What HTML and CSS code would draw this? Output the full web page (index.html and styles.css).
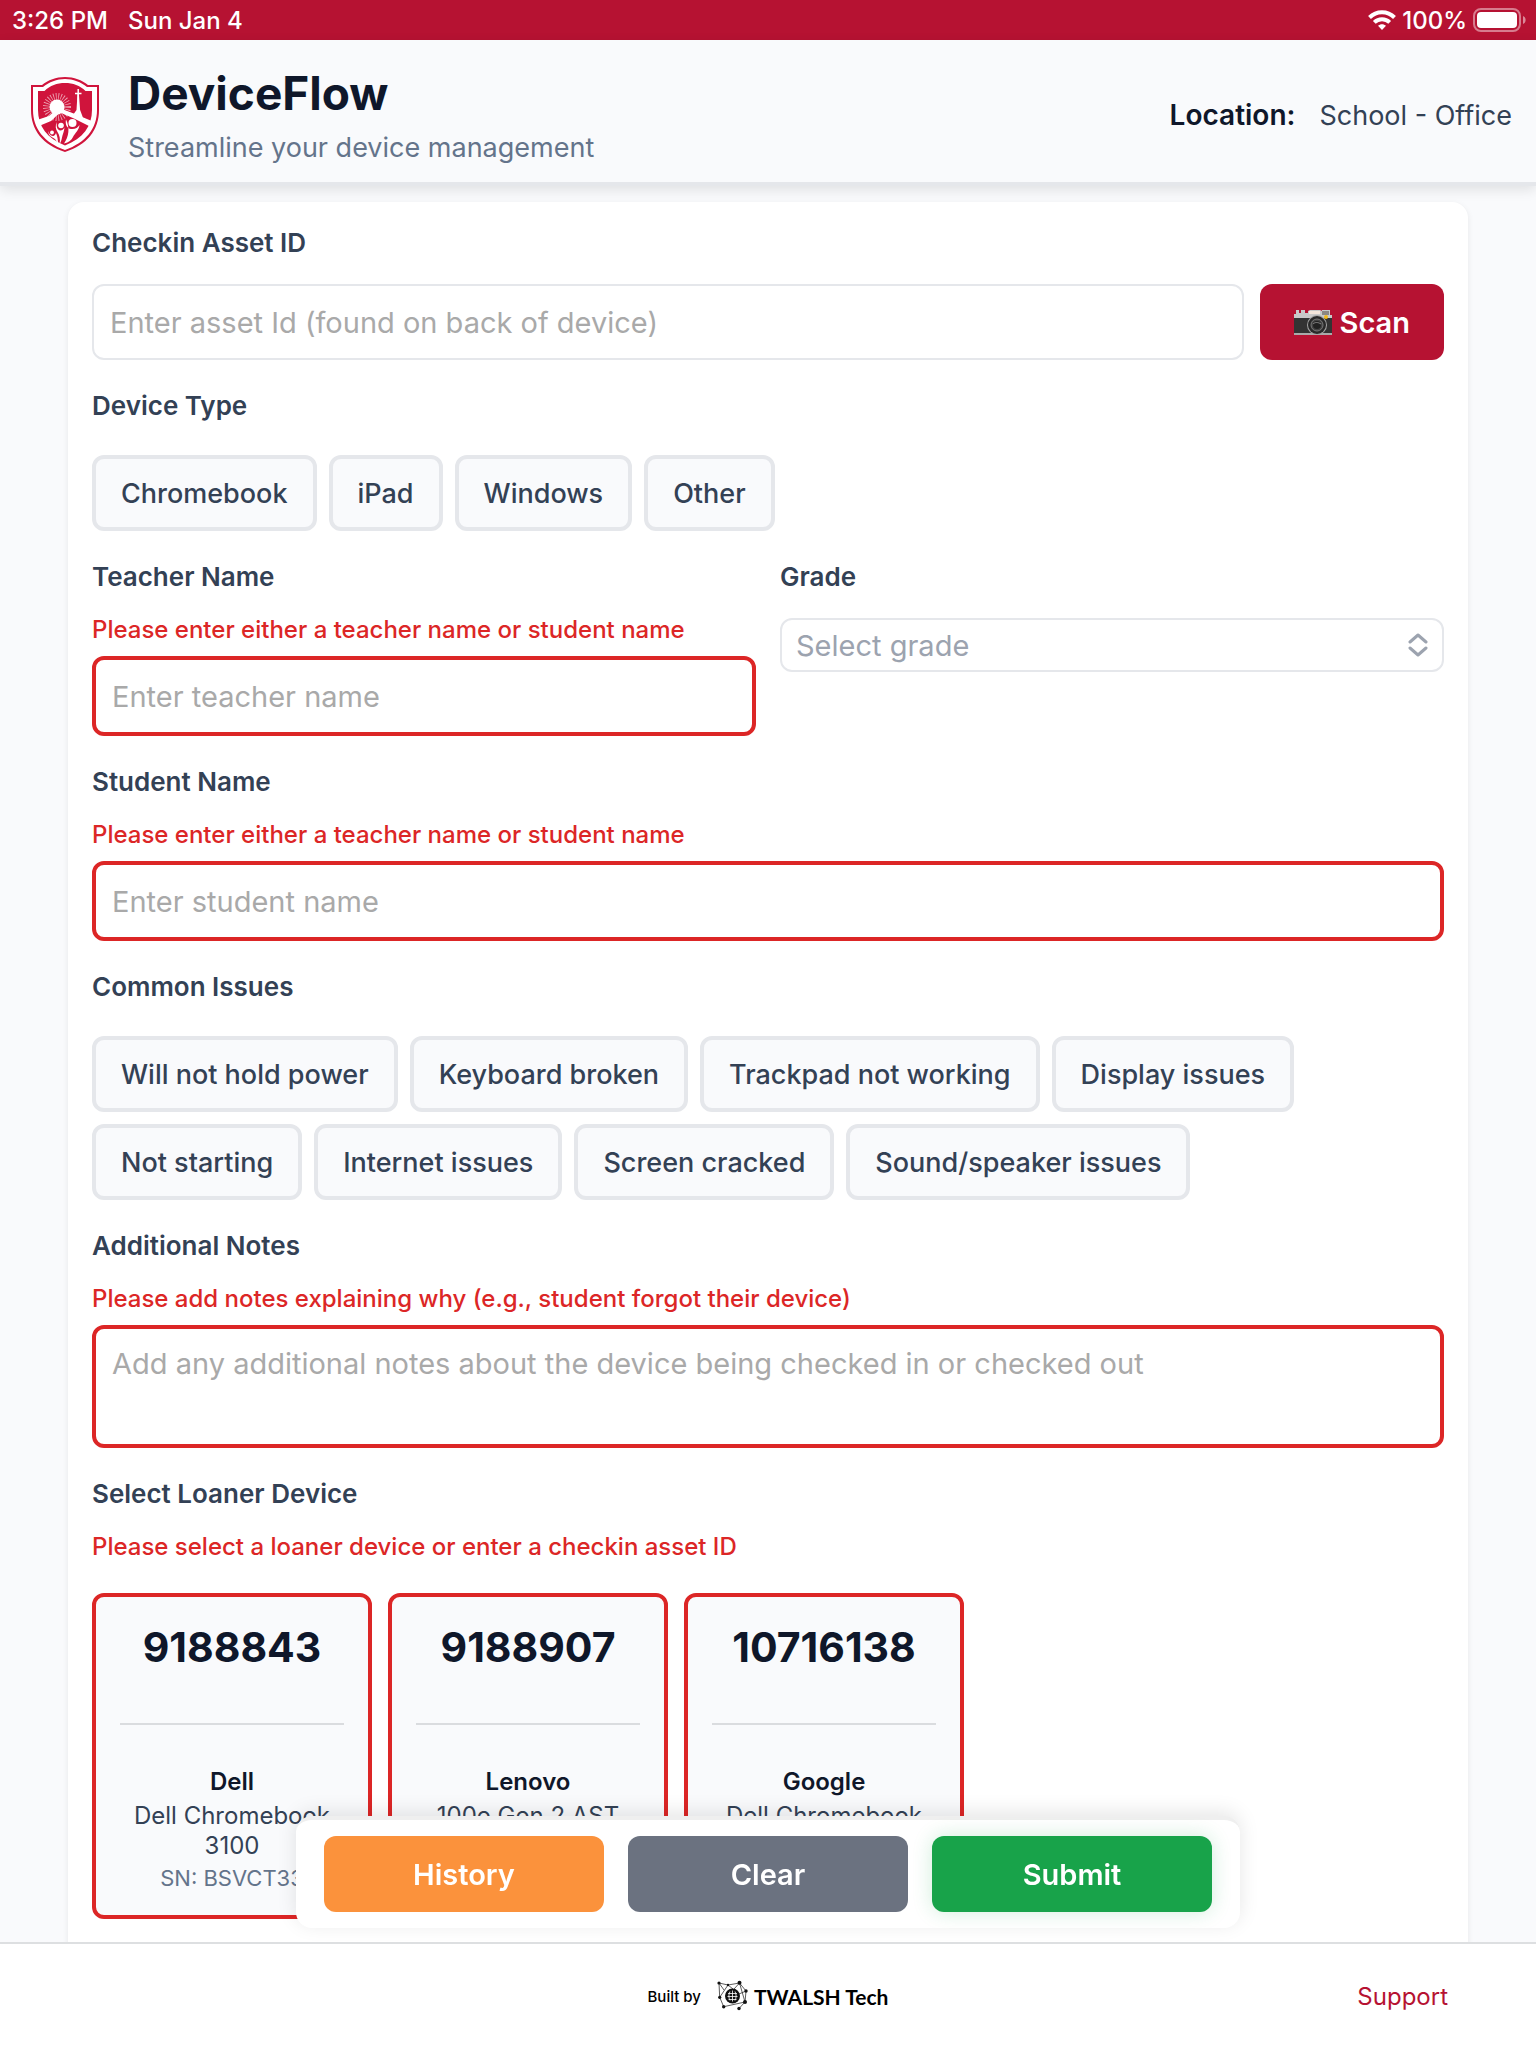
FILE: index.html
```html
<!DOCTYPE html>
<html lang="en">
<head>
    <meta charset="UTF-8">
    <meta name="viewport" content="width=device-width, initial-scale=1.0">
    <title>DeviceFlow</title>
    <link rel="stylesheet" href="styles.css">
</head>
<body>

    <!-- Status bar -->
    <div class="status-bar">
        <span>3:26 PM</span>
        <span>Sun Jan 4</span>
        <div class="status-right">
            <svg class="wifi" viewBox="0 0 28 20" width="28" height="20" fill="none" stroke="#fff" stroke-width="4">
                <path d="M1.5 7.5C8.5 .4 19.5 .4 26.5 7.5"/>
                <path d="M6.3 12.4C10.6 8.2 17.4 8.2 21.7 12.4"/>
                <path d="M14 20l-4-4.2c2.2-2.1 5.8-2.1 8 0z" fill="#fff" stroke="none"/>
            </svg>
            <span>100%</span>
            <svg class="battery" viewBox="0 0 54 24" width="54" height="24">
                <rect x="1" y="1" width="46" height="22" rx="7" fill="none" stroke="#fff" stroke-opacity=".45" stroke-width="2"/>
                <rect x="4" y="4" width="40" height="16" rx="4" fill="#fff"/>
                <path d="M50 8c3.5 1.2 3.5 6.800 0 8z" fill="#fff" fill-opacity=".5"/>
            </svg>
        </div>
    </div>

    <header class="header">
        <svg class="logo" viewBox="0 0 70 78" width="70" height="78">
            <path d="M35 1C26 1 18 4 12 9H1v25c0 20 12 35 34 42 22-7 34-22 34-42V9H58C52 4 44 1 35 1z" fill="#d0143c"/>
            <path d="M35 3c-8 0-16 3-22 8H3v23c0 18.500 11 32.500 32 40 21-7.500 32-21.500 32-40V11H57c-6-5-14-8-22-8z" fill="#fff"/>
            <path d="M35 7c-8 0-15 2.500-20.500 8H8v19c0 16 9 28.500 27 35.500C53 62.500 62 50 62 34V15h-6.500C50 9.500 43 7 35 7z" fill="#d0143c"/>
            <!-- sun and rays -->
            <circle cx="27" cy="31" r="10.500" fill="none" stroke="#fff" stroke-width="7" stroke-dasharray=".8 1.600" opacity=".6"/>
            <circle cx="27" cy="31" r="7.500" fill="#fff"/>
            <!-- hills -->
            <path d="M7 44l12-4 8-7h5l13 5 18 7.500-3 5L44 42.500 30 36.500 21 45l-12 5z" fill="#fff"/>
            <!-- steeple -->
            <path d="M43 39l3.500-5 1-16h1.400l1.200 16 3 8z" fill="#fff"/>
            <path d="M48.200 13v12M45 17.500h6.500" stroke="#fff" stroke-width="1.500"/>
            <!-- people -->
            <circle cx="42.500" cy="47" r="4" fill="#fff"/>
            <circle cx="31" cy="49.500" r="2.800" fill="#fff"/>
            <circle cx="22" cy="56.500" r="1.900" fill="#fff"/>
            <path d="M36 43.500c-1 5 1 9 5 9.500 4 .5 7-1.500 8.500-4-.5 5-4.500 8-6.500 12-1.500 3-4 5.500-9 6.500 5-7 6-16 2-24z" fill="#fff"/>
            <path d="M27 46c-1 4 0 8 3.500 8.500 1.500 0 3-1 4-3-.3 4-2 7-2.500 10-.3 2-1 4.500-2.500 6.500 1-5 0-9-2-12-2-3-2.500-6.500-.5-10z" fill="#fff"/>
            <path d="M18.500 55c.5 4 3 5 5 5 1-.5 2-1.500 2.500-3 1.500 3.500 2 7 2 11-1.500-3.500-3-5.500-5.500-6.500-3-1.500-4.500-3.500-4-6.500z" fill="#fff"/>
        </svg>
        <div class="brand">
            <h1>DeviceFlow</h1>
            <p>Streamline your device management</p>
        </div>
        <div class="location">
            <strong>Location:</strong>
            <span>School - Office</span>
        </div>
    </header>

    <main>
        <form class="card" id="checkinForm" novalidate>
            <div class="form-group">
                <label for="asset-id">Checkin Asset ID</label>
                <div class="asset-row">
                    <input type="text" id="asset-id" placeholder="Enter asset Id (found on back of device)">
                    <button type="button" class="btn btn-scan">
                        <svg viewBox="0 0 38 26" width="38" height="26">
                            <path d="M2 1h3v3h2V1h4v3h3V2l2-1h10l2 1V1h8v5h2v19H0V5h2z" fill="#c9c9c9"/>
                            <path d="M15 2h11v3H15z" fill="#f3e6dc"/>
                            <path d="M28 2h7v4h-7z" fill="#8b8784"/>
                            <path d="M0 9h38v15H0z" fill="#333"/>
                            <path d="M0 24h38v2H0z" fill="#aaa"/>
                            <circle cx="23" cy="16" r="10" fill="#a5a5a5"/>
                            <circle cx="23" cy="16" r="9" fill="#292929"/>
                            <circle cx="23" cy="16" r="6" fill="#444" stroke="#777"/>
                            <circle cx="23" cy="16" r="4" fill="#222"/>
                            <path d="M19 15c2-2 5-2 8 0" fill="none" stroke="#888"/>
                            <circle cx="32" cy="8" r="2" fill="#f2b91b"/>
                        </svg>
                        Scan
                    </button>
                </div>
            </div>

            <fieldset class="form-group">
                <legend>Device Type</legend>
                <div class="chips">
                    <button type="button" class="chip">Chromebook</button>
                    <button type="button" class="chip">iPad</button>
                    <button type="button" class="chip">Windows</button>
                    <button type="button" class="chip">Other</button>
                </div>
            </fieldset>

            <div class="form-row">
                <div class="form-group">
                    <label for="teacher-name">Teacher Name</label>
                    <p class="error">Please enter either a teacher name or student name</p>
                    <input type="text" class="invalid" id="teacher-name" placeholder="Enter teacher name">
                </div>
                <div class="form-group">
                    <label for="grade">Grade</label>
                    <div class="select-box">
                        <select id="grade">
                            <option>Select grade</option>
                        </select>
                        <svg viewBox="0 0 20 24" width="20" height="24" fill="none" stroke="#9ca3af" stroke-width="3" stroke-linecap="round" stroke-linejoin="round">
                            <path d="M2 9l8-7 8 7M2 15l8 7 8-7"/>
                        </svg>
                    </div>
                </div>
            </div>

            <div class="form-group">
                <label for="student-name">Student Name</label>
                <p class="error">Please enter either a teacher name or student name</p>
                <input type="text" class="invalid" id="student-name" placeholder="Enter student name">
            </div>

            <fieldset class="form-group">
                <legend>Common Issues</legend>
                <div class="chips">
                    <button type="button" class="chip">Will not hold power</button>
                    <button type="button" class="chip">Keyboard broken</button>
                    <button type="button" class="chip">Trackpad not working</button>
                    <button type="button" class="chip">Display issues</button>
                    <button type="button" class="chip">Not starting</button>
                    <button type="button" class="chip">Internet issues</button>
                    <button type="button" class="chip">Screen cracked</button>
                    <button type="button" class="chip">Sound/speaker issues</button>
                </div>
            </fieldset>

            <div class="form-group">
                <label for="notes">Additional Notes</label>
                <p class="error">Please add notes explaining why (e.g., student forgot their device)</p>
                <textarea class="invalid" id="notes" placeholder="Add any additional notes about the device being checked in or checked out"></textarea>
            </div>

            <fieldset class="form-group">
                <legend>Select Loaner Device</legend>
                <p class="error">Please select a loaner device or enter a checkin asset ID</p>
                <div class="loaners">
                    <button type="button" class="loaner">
                        <span class="loaner-id">9188843</span>
                        <span class="loaner-make">Dell</span>
                        <span class="loaner-model">Dell Chromebook 3100</span>
                        <span class="loaner-sn">SN: BSVCT33</span>
                    </button>
                    <button type="button" class="loaner">
                        <span class="loaner-id">9188907</span>
                        <span class="loaner-make">Lenovo</span>
                        <span class="loaner-model">100e Gen 2 AST</span>
                    </button>
                    <button type="button" class="loaner">
                        <span class="loaner-id">10716138</span>
                        <span class="loaner-make">Google</span>
                        <span class="loaner-model">Dell Chromebook</span>
                    </button>
                </div>
            </fieldset>
        </form>
    </main>

    <!-- Floating actions -->
    <div class="actions">
        <button type="button" class="btn btn-history">History</button>
        <button type="reset" form="checkinForm" class="btn btn-clear">Clear</button>
        <button type="submit" form="checkinForm" class="btn btn-submit">Submit</button>
    </div>

    <footer class="footer">
        <div class="built-by">
            <span>Built by</span>
            <svg viewBox="0 0 32 32" width="32" height="32">
                <path d="M2 3l9 2 11.500-2L29 11l-1 11-6 6.500M6.700 26.700L2.700 17.300 2 3M2 3l5 7M11 5L2.700 17.300M22.500 3L28 22 6.700 26.700M11 5l5 4M22.500 3L17 9M29 11l-7 3" fill="none" stroke="#333" stroke-width=".8"/>
                <circle cx="15.500" cy="16" r="7.500" fill="#111"/>
                <path d="M11 13.500h9M10.500 16.500h10M11.500 19.500h8M15.500 10.500v11M13 11.500c-1.500 3-1.500 6 0 9M18 11.500c1.500 3 1.500 6 0 9" fill="none" stroke="#fff" stroke-width=".8"/>
                <g fill="#111">
                    <circle cx="2" cy="3" r="1.600"/>
                    <circle cx="11" cy="5" r="1.200"/>
                    <circle cx="22.500" cy="2.700" r="2"/>
                    <circle cx="29" cy="11" r="1.700"/>
                    <circle cx="28" cy="22" r="2"/>
                    <circle cx="22" cy="28.500" r="1.700"/>
                    <circle cx="6.700" cy="26.700" r="1.700"/>
                    <circle cx="2.700" cy="17.300" r="1.600"/>
                </g>
            </svg>
            <strong>TWALSH Tech</strong>
        </div>
        <a href="#">Support</a>
    </footer>

</body>
</html>
```
FILE: styles.css
```css
* {
    box-sizing: border-box;
}

body {
    margin: 0;
    height: 100vh;
    display: flex;
    flex-direction: column;
    overflow: hidden;
    background-color: #f9fafc;
    font-family: Inter, "Liberation Sans", sans-serif;
    color: #334155;
}

h1,
p {
    margin: 0;
}

button,
input,
select,
textarea {
    font-family: inherit;
}

/* Status bar */
.status-bar {
    flex: none;
    display: flex;
    align-items: center;
    gap: 20px;
    height: 40px;
    padding: 0 9px 0 12px;
    background-color: #b61232;
    color: white;
    font-size: 24px;
    font-weight: 500;
}

.status-right {
    display: flex;
    align-items: center;
    gap: 6px;
    margin-left: auto;
}

/* Header */
.header {
    flex: none;
    display: flex;
    align-items: center;
    gap: 28px;
    padding: 20px 24px 12px 30px;
    background-color: #f9fafc;
    border-bottom: 4px solid #e5e7eb;
    box-shadow: 0 4px 12px rgba(0, 0, 0, 0.1);
    z-index: 1;
}

.brand h1 {
    font-size: 46px;
    line-height: 66px;
    color: #0f172a;
}

.brand p {
    font-size: 27px;
    line-height: 44px;
    color: #64748b;
}

.location {
    display: flex;
    align-items: baseline;
    gap: 24px;
    margin-left: auto;
    font-size: 27px;
}

.location strong {
    font-size: 28px;
    font-weight: 600;
    color: #0f172a;
}

/* Form card */
main {
    flex: 1;
    min-height: 0;
    padding: 16px 68px 0;
    overflow-y: auto;
    scrollbar-width: none;
}

.card {
    min-height: 100%;
    padding: 24px 24px 140px;
    display: flex;
    flex-direction: column;
    gap: 29px;
    background-color: white;
    border-radius: 16px;
    box-shadow: 0 2px 6px rgba(0, 0, 0, 0.08);
}

.form-group {
    min-width: 0;
    margin: 0;
    padding: 0;
    border: none;
}

.form-row {
    display: grid;
    grid-template-columns: 1fr 1fr;
    gap: 24px;
}

label,
legend {
    display: block;
    margin-bottom: 24px;
    padding: 0;
    font-size: 26px;
    line-height: 34px;
    font-weight: 600;
}

.error {
    margin-bottom: 14px;
    font-size: 24px;
    line-height: 24px;
    font-weight: 500;
    color: #dc2626;
}

input,
textarea {
    display: block;
    width: 100%;
    height: 76px;
    padding: 0 16px;
    border: 2px solid #e5e7eb;
    border-radius: 12px;
    background-color: white;
    font-size: 29px;
}

textarea {
    height: 123px;
    padding: 16px;
    line-height: 38px;
    resize: none;
}

input::placeholder,
textarea::placeholder {
    color: #a9a9a9;
}

.invalid {
    border: 4px solid #dc2626;
}

input.invalid {
    height: 80px;
}

.select-box {
    display: flex;
    align-items: center;
    padding-right: 14px;
    border: 2px solid #e5e7eb;
    border-radius: 12px;
}

select {
    flex: 1;
    height: 50px;
    padding: 0 14px;
    border: none;
    background: none;
    appearance: none;
    font-size: 29px;
    color: #9ca3af;
}

.asset-row {
    display: flex;
    gap: 16px;
}

/* Buttons */
.btn {
    height: 76px;
    border: none;
    border-radius: 12px;
    color: white;
    font-size: 29px;
    font-weight: 600;
    cursor: pointer;
}

.btn-scan {
    flex: none;
    display: flex;
    align-items: center;
    gap: 8px;
    padding: 0 34px;
    background-color: #b61232;
}

.chips {
    display: flex;
    flex-wrap: wrap;
    gap: 12px;
    padding-top: 8px;
}

.chip {
    height: 76px;
    padding: 0 25px;
    border: 4px solid #e5e7eb;
    border-radius: 12px;
    background-color: #f9fafc;
    color: #334155;
    font-size: 27px;
    font-weight: 500;
    cursor: pointer;
}

/* Loaner devices */
.loaners {
    display: flex;
    flex-wrap: wrap;
    gap: 16px;
    padding-top: 20px;
}

.loaner {
    width: 280px;
    height: 326px;
    padding: 24px;
    display: flex;
    flex-direction: column;
    border: 4px solid #dc2626;
    border-radius: 12px;
    background-color: #f9fafc;
    color: #334155;
    font-size: 24px;
    line-height: 30px;
    text-align: center;
    cursor: pointer;
}

.loaner-id {
    padding-bottom: 50px;
    margin-bottom: 42px;
    border-bottom: 2px solid #dadcdf;
    font-size: 41px;
    line-height: 52px;
    font-weight: 700;
    color: #0f172a;
}

.loaner-make {
    margin-bottom: 4px;
    font-weight: 600;
    color: #0f172a;
}

.loaner-sn {
    margin-top: 2px;
    font-size: 22px;
    color: #64748b;
}

/* Floating action bar */
.actions {
    position: fixed;
    bottom: 120px;
    left: 50%;
    transform: translateX(-50%);
    display: flex;
    gap: 24px;
    padding: 16px 28px;
    border-top: 4px solid #efefef;
    border-radius: 16px;
    background-color: white;
    box-shadow: 0 -4px 20px rgba(0, 0, 0, 0.1);
    z-index: 2;
}

.actions .btn {
    width: 280px;
}

.btn-history {
    background-color: #fb923c;
}

.btn-clear {
    background-color: #6b7280;
}

.btn-submit {
    background-color: #18a34a;
    box-shadow: 0 0 20px rgba(24, 163, 74, 0.2);
}

/* Footer */
.footer {
    flex: none;
    display: grid;
    grid-template-columns: 1fr auto 1fr;
    align-items: center;
    height: 106px;
    padding: 0 88px;
    border-top: 2px solid #dddfe1;
    background-color: white;
}

.built-by {
    grid-column: 2;
    display: flex;
    align-items: center;
    font-size: 15px;
    font-weight: 500;
    color: black;
}

.built-by svg {
    margin: 0 5px 0 16px;
}

.built-by strong {
    font-family: Lato, sans-serif;
    font-size: 21px;
}

.footer a {
    justify-self: end;
    font-size: 24px;
    color: #b61232;
    text-decoration: none;
}
```
